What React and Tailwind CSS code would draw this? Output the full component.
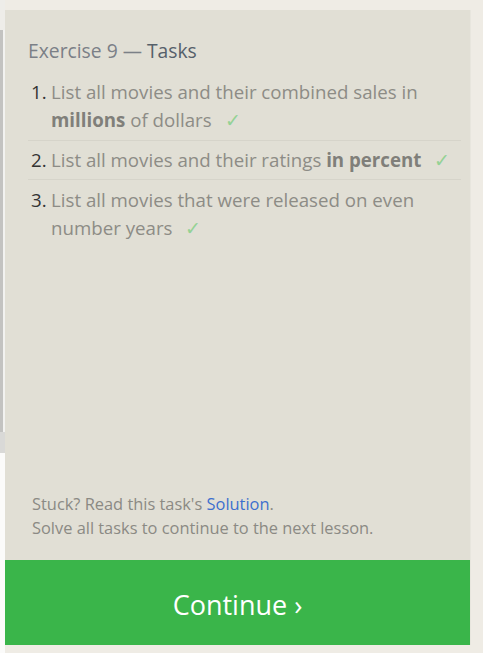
export default function App() {
  const font = { fontFamily: '"Open Sans", "Noto Sans", sans-serif' };
  const Check = () => (
    <span className="ml-[13px] text-[#94d294] font-light">✓</span>
  );
  return (
    <div className="w-[483px] h-[653px] bg-[#efece5] flex overflow-hidden" style={font}>
      <div className="w-[5px] flex flex-col shrink-0">
        <div className="h-[30px] bg-[#eeede9]" />
        <div className="h-[402px] flex">
          <div className="w-[3px] bg-[#c3c3c1]" />
          <div className="w-[2px] bg-[#f2f2f0]" />
        </div>
        <div className="h-[21px] bg-[#d9d9d7]" />
        <div className="flex-1 bg-[#fbfbfa]" />
      </div>
      <div className="mt-[10px] mb-[8px] w-[466px] flex flex-col bg-[#e1dfd5] border-r border-[#e8e6de]">
        <div className="flex-1 flex flex-col pl-[23px] pr-[9px] pt-[27px]">
          <h1 className="text-[19.3px] leading-[28px] text-[#7b8087]">
            Exercise 9 — <span className="text-[#56606a]">Tasks</span>
          </h1>
          <ol className="mt-[13px] text-[18.7px] leading-[28px] text-[#8d8c86]">
            <li className="flex pb-[6px] border-b border-[#d6d4ca]">
              <span className="w-[23px] shrink-0 pl-[3px] text-[#333333]">1.</span>
              <span>
                List all movies and their combined sales in <b className="font-bold text-[#807f7a]">millions</b> of dollars
                <Check />
              </span>
            </li>
            <li className="flex py-[5px] border-b border-[#d6d4ca]">
              <span className="w-[23px] shrink-0 pl-[3px] text-[#333333]">2.</span>
              <span>
                List all movies and their ratings <b className="font-bold text-[#807f7a]">in percent</b>
                <Check />
              </span>
            </li>
            <li className="flex pt-[6px]">
              <span className="w-[23px] shrink-0 pl-[3px] text-[#333333]">3.</span>
              <span>
                List all movies that were released on even number years
                <Check />
              </span>
            </li>
          </ol>
          <div className="mt-auto pb-[20px] pl-[4px] text-[16.4px] leading-[24px] text-[#8b8a84]">
            <p>
              Stuck? Read this task's <span className="text-[#3d6fce]">Solution</span>.
            </p>
            <p>Solve all tasks to continue to the next lesson.</p>
          </div>
        </div>
        <div className="h-[85px] pt-[5px] bg-[#3ab54a] flex items-center justify-center text-white text-[27px]">
          Continue ›
        </div>
      </div>
    </div>
  );
}
